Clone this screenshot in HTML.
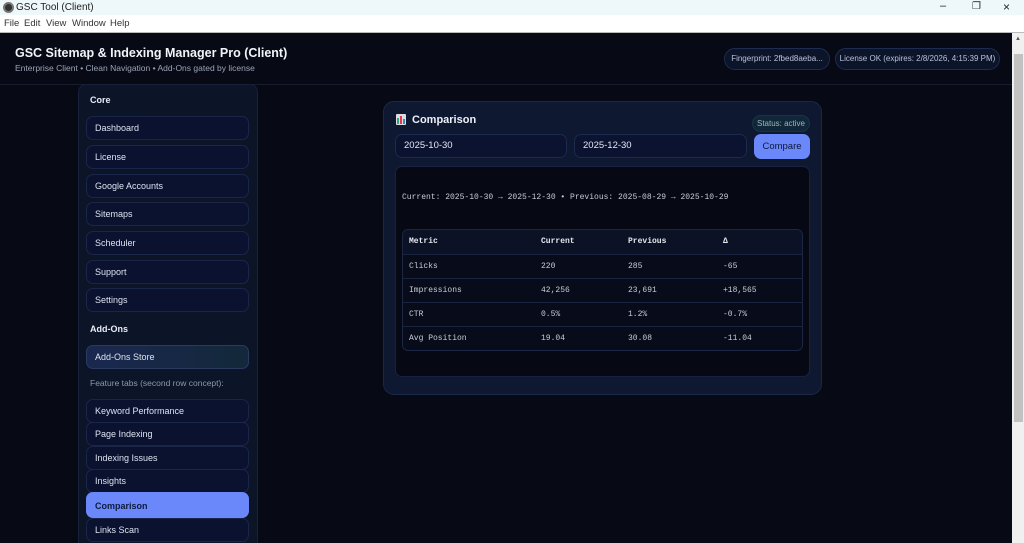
<!DOCTYPE html>
<html><head><meta charset="utf-8"><style>
*{box-sizing:border-box;margin:0;padding:0}
html,body{width:1024px;height:543px;overflow:hidden}
body{background:#070a14;font-family:"Liberation Sans",sans-serif;position:relative}
.tb{position:absolute;left:0;top:0;width:1024px;height:15px;background:#eef7f9;font-size:10px;color:#222}
.mb{position:absolute;left:0;top:15px;width:1024px;height:18px;background:#fff;font-size:9.5px;color:#333;border-bottom:1px solid #bbb}
.abs{position:absolute;white-space:nowrap}
.hdr{position:absolute;left:0;top:33px;width:1012px;height:52px;border-bottom:1px solid #161d30;background:#070a14}
.pill{position:absolute;top:48px;height:22px;border:1px solid #1e2c4f;background:#0c1429;border-radius:11px;color:#b8c2d8;font-size:8px;line-height:20px;text-align:center;white-space:nowrap}
.sb{position:absolute;left:78px;top:84px;width:180px;height:470px;background:#0c1428;border:1px solid #17213a;border-radius:8px}
.it{position:absolute;left:86px;width:163px;height:24px;border:1px solid #1a2648;border-radius:7px;background:#0a1230;color:#dde3f0;font-size:9px;line-height:22px;padding-left:8px}
.sec{position:absolute;left:90px;color:#e8ecf6;font-size:9px;font-weight:bold}
.card{position:absolute;left:383px;top:101px;width:439px;height:294px;background:#0f1831;border:1px solid #1b2747;border-radius:11px}
.inp{position:absolute;top:134px;height:24px;border:1px solid #1c2a4e;background:#0b1330;border-radius:7px;color:#e2e8f4;font-size:9.5px;line-height:22px;padding-left:8px}
.mono{font-family:"Liberation Mono",monospace;font-size:8px;color:#c8ccd6}
table{border-collapse:collapse;width:100%}
td{height:24px;padding-left:6px;border-top:1px solid #1a2440}
tr:first-child td{border-top:none;font-weight:bold;color:#e6e8ee;background:#0b1226}
</style></head><body>
<div class="tb"><div class="abs" style="left:3px;top:2px;width:11px;height:11px;border-radius:50%;background:#333;border:2px solid #777"></div><span class="abs" style="left:16px;top:2px">GSC Tool (Client)</span>
<span class="abs" style="left:940px;top:0px;font-size:11px">&#8211;</span><span class="abs" style="left:972px;top:1px;font-size:10px">&#10064;</span><span class="abs" style="left:1003px;top:0px;font-size:12px">&#215;</span></div>
<div class="mb"><span class="abs" style="left:4px;top:3px">File</span><span class="abs" style="left:24px;top:3px">Edit</span><span class="abs" style="left:46px;top:3px">View</span><span class="abs" style="left:72px;top:3px">Window</span><span class="abs" style="left:110px;top:3px">Help</span></div>
<div class="abs" style="left:1012px;top:33px;width:12px;height:510px;background:#f0f0f0"></div>
<div class="abs" style="left:1014px;top:54px;width:9px;height:368px;background:#c2c2c2"></div>
<div class="abs" style="left:1015px;top:36px;font-size:6px;color:#555">&#9650;</div>
<div class="hdr"></div>
<div class="abs" style="left:15px;top:46px;color:#f2f4fa;font-size:12.5px;font-weight:bold">GSC Sitemap &amp; Indexing Manager Pro (Client)</div>
<div class="abs" style="left:15px;top:63px;color:#9aa3b8;font-size:8.5px">Enterprise Client • Clean Navigation • Add-Ons gated by license</div>
<div class="pill" style="left:724px;width:106px">Fingerprint: 2fbed8aeba...</div>
<div class="pill" style="left:835px;width:165px">License OK (expires: 2/8/2026, 4:15:39 PM)</div>
<div class="sb"></div>
<div class="sec" style="top:95px">Core</div>
<div class="it" style="top:116px">Dashboard</div>
<div class="it" style="top:145px">License</div>
<div class="it" style="top:174px">Google Accounts</div>
<div class="it" style="top:202px">Sitemaps</div>
<div class="it" style="top:231px">Scheduler</div>
<div class="it" style="top:260px">Support</div>
<div class="it" style="top:288px">Settings</div>
<div class="sec" style="top:324px">Add-Ons</div>
<div class="it" style="top:345px;background:linear-gradient(90deg,#1a2850,#13283a);border-color:#2a3a60">Add-Ons Store</div>
<div class="abs" style="left:90px;top:378px;font-size:8.5px;color:#8e97ab">Feature tabs (second row concept):</div>
<div class="it" style="top:399px">Keyword Performance</div>
<div class="it" style="top:422px">Page Indexing</div>
<div class="it" style="top:446px">Indexing Issues</div>
<div class="it" style="top:469px">Insights</div>
<div class="it" style="top:492px;height:26px;line-height:26px;background:#6b88fb;border-color:#6b88fb;color:#0e1a3e;font-weight:bold">Comparison</div>
<div class="it" style="top:518px">Links Scan</div>
<div class="card"></div>
<div class="abs" style="left:396px;top:114px;width:10px;height:11px;background:#ddd;border-radius:1px"><div class="abs" style="left:1px;top:4px;width:2px;height:6px;background:#2a8"></div><div class="abs" style="left:4px;top:2px;width:2px;height:8px;background:#e35"></div><div class="abs" style="left:7px;top:5px;width:2px;height:5px;background:#38c"></div></div>
<div class="abs" style="left:412px;top:114px;color:#eef1f8;font-size:11px;font-weight:bold">Comparison</div>
<div class="abs" style="left:752px;top:115px;width:58px;height:17px;border-radius:9px;background:#10273a;border:1px solid #1a3444;color:#9fb5b8;font-size:8px;line-height:15px;text-align:center">Status: active</div>
<div class="inp" style="left:395px;width:172px">2025-10-30</div>
<div class="inp" style="left:574px;width:173px">2025-12-30</div>
<div class="abs" style="left:754px;top:134px;width:56px;height:25px;border-radius:7px;background:#6b88fb;color:#0f1836;font-size:9.5px;line-height:25px;text-align:center">Compare</div>
<div class="abs" style="left:395px;top:166px;width:415px;height:211px;background:#060914;border:1px solid #182240;border-radius:7px"></div>
<div class="abs mono" style="left:402px;top:193px">Current: 2025-10-30 → 2025-12-30 • Previous: 2025-08-29 → 2025-10-29</div>
<div class="abs mono" style="left:402px;top:229px;width:401px;border:1px solid #1c2746;border-radius:6px;overflow:hidden;background:#080c1a">
<table>
<tr><td style="width:132px">Metric</td><td style="width:87px">Current</td><td style="width:95px">Previous</td><td>Δ</td></tr>
<tr><td>Clicks</td><td>220</td><td>285</td><td>-65</td></tr>
<tr><td>Impressions</td><td>42,256</td><td>23,691</td><td>+18,565</td></tr>
<tr><td>CTR</td><td>0.5%</td><td>1.2%</td><td>-0.7%</td></tr>
<tr><td>Avg Position</td><td>19.04</td><td>30.08</td><td>-11.04</td></tr>
</table></div>
</body></html>
